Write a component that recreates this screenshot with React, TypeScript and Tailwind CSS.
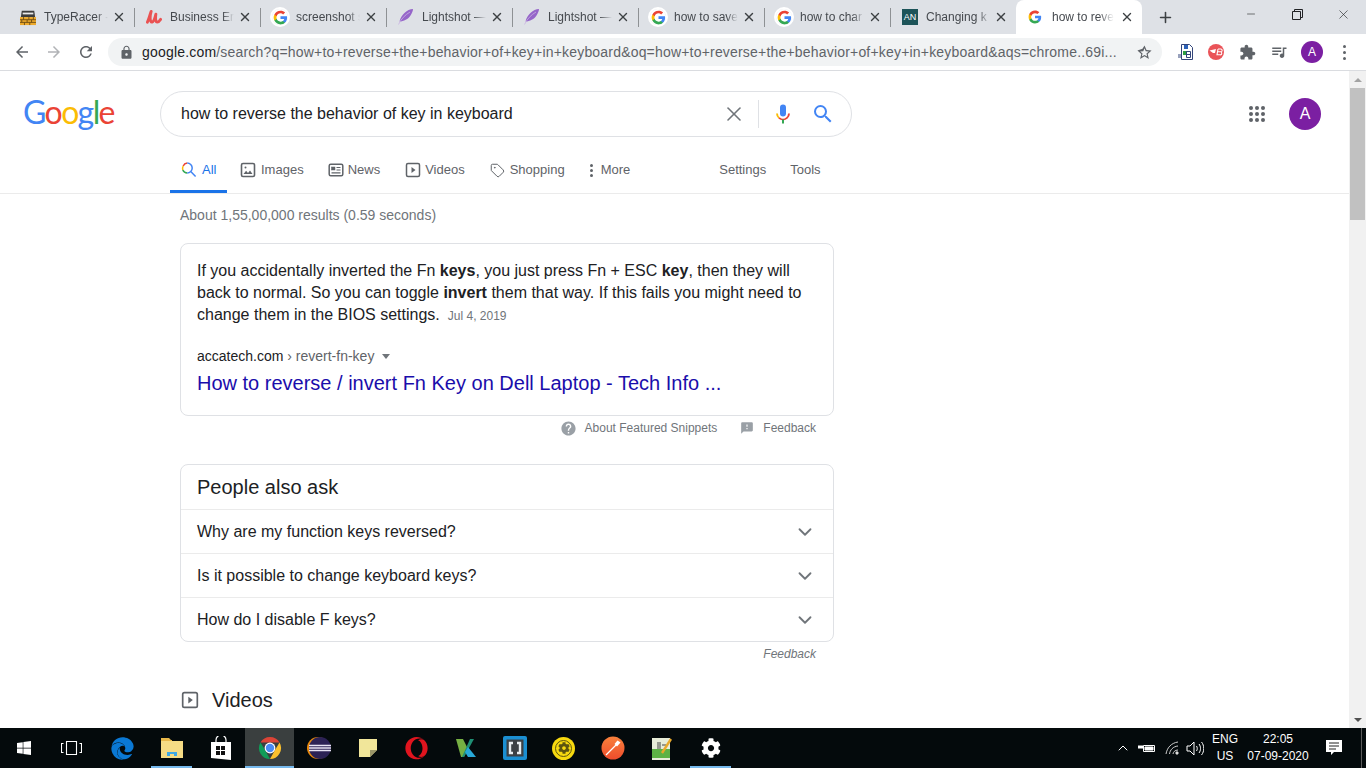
import React from "react";
import { X, Plus, Minus, ChevronDown, Tag, ChevronUp } from "lucide-react";
import { FaEdge, FaOpera, FaWindows, FaCog } from "react-icons/fa";

const GoogleG = ({ size = 16 }: { size?: number }) => (
  <svg width={size} height={size} viewBox="0 0 24 24">
    <path fill="#4285F4" d="M22.56 12.25c0-.78-.07-1.53-.2-2.25H12v4.26h5.92c-.26 1.37-1.04 2.53-2.21 3.31v2.77h3.57c2.08-1.92 3.28-4.74 3.28-8.09z" />
    <path fill="#34A853" d="M12 23c2.97 0 5.46-.98 7.28-2.66l-3.57-2.77c-.98.66-2.23 1.06-3.71 1.06-2.86 0-5.29-1.93-6.16-4.53H2.18v2.84C3.99 20.53 7.7 23 12 23z" />
    <path fill="#FBBC05" d="M5.84 14.09c-.22-.66-.35-1.36-.35-2.09s.13-1.43.35-2.09V7.07H2.18C1.43 8.55 1 10.22 1 12s.43 3.45 1.18 4.93l2.85-2.22.81-.62z" />
    <path fill="#EA4335" d="M12 5.38c1.62 0 3.06.56 4.21 1.64l3.15-3.15C17.45 2.09 14.97 1 12 1 7.7 1 3.99 3.47 2.18 7.07l3.66 2.84c.87-2.6 3.3-4.53 6.16-4.53z" />
  </svg>
);

const GoogleFav = () => (
  <div className="w-4 h-4 flex items-center justify-center rounded-full bg-white outline outline-2 outline-white">
    <GoogleG size={15} />
  </div>
);

const TypeRacerFav = () => (
  <svg width="18" height="17" viewBox="0 0 18 17">
    <path fill="#3c3c3c" d="M2 1h14l1 7H1z" />
    <path fill="#e9e9e9" d="M3 3h12v2H3z" />
    <path fill="#eda92b" d="M0 8h18v9H0z" />
    <path stroke="#6b4a12" strokeWidth="1" d="M0 11h18M0 14h18M4 8v3M10 8v3M15 8v3M2 11v3M8 11v3M13 11v3M5 14v3M11 14v3" />
  </svg>
);

const UdemyFav = () => (
  <svg width="17" height="16" viewBox="0 0 17 16" fill="none" stroke="#ea5252" strokeWidth="3" strokeLinecap="round">
    <path d="M1.500 13.500C3 10 4 6 5.500 2M5.500 2C4 7 4 14 6.500 13.500 8.500 13 9.500 9 10.500 5M10.500 5C10 9 10 13.500 12 13.500 13.500 13.500 14.500 12 15.500 10.500" />
  </svg>
);

const FeatherFav = () => (
  <svg width="16" height="16" viewBox="0 0 16 16">
    <path fill="#9565c9" d="M15 0C9 .5 3.500 5 1.500 12.500c4 0 9-2.500 11-6C14 4 15 2 15 0z" />
    <path stroke="#c9b3e2" strokeWidth=".8" fill="none" d="M.5 15.500C3 10 7 6 12 3" />
  </svg>
);

const AnFav = () => (
  <div className="w-4 h-4 bg-[#1d5459] text-white text-[9px] leading-4 text-center">AN</div>
);

const tabs = [
  { title: "TypeRacer -", icon: <TypeRacerFav /> },
  { title: "Business En", icon: <UdemyFav /> },
  { title: "screenshot s", icon: <GoogleFav /> },
  { title: "Lightshot —", icon: <FeatherFav /> },
  { title: "Lightshot —", icon: <FeatherFav /> },
  { title: "how to save", icon: <GoogleFav /> },
  { title: "how to char", icon: <GoogleFav /> },
  { title: "Changing k", icon: <AnFav /> },
];

const TabStrip = () => (
  <div className="h-[34px] bg-[#dee1e6] flex pl-[8px] shrink-0 relative">
    {tabs.map((t, i) => (
      <div key={i} className="w-[126px] h-[34px] flex items-center pl-[12px] pr-[8px] relative">
        <div className="w-4 flex justify-center shrink-0">{t.icon}</div>
        <div className="ml-[8px] w-[64px] overflow-hidden whitespace-nowrap text-[12px] text-[#45494e] [mask-image:linear-gradient(to_right,black_82%,transparent)]">
          {t.title}
        </div>
        <X size={14} strokeWidth={2.4} className="ml-auto text-[#3c4043]" />
        {i < 7 && <div className="absolute right-[-1px] top-[8px] h-[19px] w-px bg-[#8e9194]" />}
      </div>
    ))}
    <div className="w-[126px] h-[34px] bg-white rounded-t-[8px] flex items-center pl-[12px] pr-[8px]">
      <GoogleG size={14} />
      <div className="ml-[10px] w-[62px] overflow-hidden whitespace-nowrap text-[12px] text-[#45494e] [mask-image:linear-gradient(to_right,black_75%,transparent)]">
        how to reve
      </div>
      <X size={14} strokeWidth={2.4} className="ml-auto text-[#3c4043]" />
    </div>
    <div className="w-[46px] flex items-center justify-center">
      <Plus size={17} strokeWidth={2.2} className="text-[#3c4043]" />
    </div>
    <div className="ml-auto flex h-[28px] items-center text-[#202124]">
      <div className="w-[46px] flex justify-center"><Minus size={12} strokeWidth={1.2} /></div>
      <div className="w-[46px] flex justify-center">
        <svg width="11" height="11" viewBox="0 0 11 11" fill="none" stroke="#202124">
          <path d="M.5 2.500h8v8h-8zM2.500 2.500v-2h8v8h-2" />
        </svg>
      </div>
      <div className="w-[46px] flex justify-center"><X size={15} strokeWidth={1} /></div>
    </div>
  </div>
);

const MIcon = ({ d, size = 16, color = "#5f6368" }: { d: string; size?: number; color?: string }) => (
  <svg width={size} height={size} viewBox="0 0 24 24" fill={color}><path d={d} /></svg>
);

const UrlBar = () => (
  <div className="h-[37px] bg-white border-b border-[#dadce0] flex items-center shrink-0">
    <div className="w-[108px] flex items-center pl-[13px] shrink-0">
      <MIcon size={18} d="M20 11H7.83l5.59-5.59L12 4l-8 8 8 8 1.41-1.41L7.83 13H20v-2z" />
      <div className="ml-[14px]"><MIcon size={18} color="#b1b3b6" d="M12 4l-1.41 1.41L16.17 11H4v2h12.17l-5.58 5.59L12 20l8-8z" /></div>
      <div className="ml-[14px]"><MIcon size={18} d="M17.65 6.35C16.2 4.9 14.21 4 12 4c-4.42 0-7.99 3.58-7.99 8s3.57 8 7.99 8c3.73 0 6.84-2.55 7.73-6h-2.08c-.82 2.33-3.04 4-5.65 4-3.31 0-6-2.69-6-6s2.69-6 6-6c1.66 0 3.14.69 4.22 1.78L13 11h7V4l-2.35 2.35z" /></div>
    </div>
    <div className="w-[1054px] h-[28px] rounded-full bg-[#f1f3f4] flex items-center pl-[11px] pr-[9px] shrink-0">
      <MIcon size={15} color="#5f6368" d="M18 8h-1V6c0-2.76-2.24-5-5-5S7 3.24 7 6v2H6c-1.1 0-2 .9-2 2v10c0 1.1.9 2 2 2h12c1.1 0 2-.9 2-2V10c0-1.1-.9-2-2-2zm-6 9c-1.1 0-2-.9-2-2s.9-2 2-2 2 .9 2 2-.9 2-2 2zm3.1-9H8.9V6c0-1.71 1.39-3.1 3.1-3.1 1.71 0 3.1 1.39 3.1 3.1v2z" />
      <div className="ml-[8px] text-[14px] text-[#5f6368] whitespace-nowrap tracking-[0.19px]">
        <span className="text-[#202124]">google.com</span>/search?q=how+to+reverse+the+behavior+of+key+in+keyboard&amp;oq=how+to+reverse+the+behavior+of+key+in+keyboard&amp;aqs=chrome..69i...
      </div>
      <div className="ml-auto"><MIcon size={17} d="M22 9.24l-7.19-.62L12 2 9.19 6.63 2 9.24l5.46 4.73L5.82 21 12 17.27 18.18 21l-1.63-7.03L22 9.24zM12 15.4l-3.76 2.27 1-4.28-3.32-2.88 4.38-.38L12 6.1l1.71 4.04 4.38.38-3.32 2.88 1 4.28L12 15.4z" /></div>
    </div>
    <div className="flex items-center ml-[14px]">
      <svg width="18" height="18" viewBox="0 0 18 18" className="ml-[1px]">
        <path fill="#fff" stroke="#33457a" d="M4.500 1.500h8l3 3v12h-11z" />
        <path fill="#2f9e44" d="M6 8h4v4H6z" />
        <path fill="#2d62b8" d="M7 2h4v4H7z" />
        <path stroke="#33457a" fill="none" d="M9.500 8.500h4v6h-4zM9.500 11.500h4M1 12h3M1 14h3" />
      </svg>
      <svg width="16" height="16" viewBox="0 0 16 16" className="ml-[13px]">
        <circle cx="8" cy="8" r="8" fill="#ea5358" />
        <path fill="#fff" d="M1.500 6.500L8 5 7 9H5z" />
        <path fill="none" stroke="#fff" strokeWidth="1.100" d="M10 5h2.500a1 1 0 0 1 .5 2.800H9.500M9.500 7.800h3a1.200 1.200 0 0 1-.5 3H9L10 5" />
      </svg>
      <div className="ml-[15px]"><MIcon size={17} d="M20.5 11H19V7c0-1.1-.9-2-2-2h-4V3.5C13 2.12 11.88 1 10.5 1S8 2.12 8 3.5V5H4c-1.1 0-1.99.9-1.99 2v3.8H3.5c1.49 0 2.7 1.21 2.7 2.7s-1.21 2.7-2.7 2.7H2V20c0 1.1.9 2 2 2h3.8v-1.5c0-1.49 1.21-2.7 2.7-2.7 1.49 0 2.7 1.21 2.7 2.7V22H17c1.1 0 2-.9 2-2v-4h1.5c1.38 0 2.5-1.12 2.5-2.5S21.88 11 20.5 11z" /></div>
      <div className="ml-[14px]"><MIcon size={18} d="M15 6H3v2h12V6zm0 4H3v2h12v-2zM3 16h8v-2H3v2zM17 6v8.18c-.31-.11-.65-.18-1-.18-1.66 0-3 1.34-3 3s1.34 3 3 3 3-1.34 3-3V8h3V6h-5z" /></div>
      <div className="ml-[13px] w-[22px] h-[22px] rounded-full bg-[#7b1fa2] text-white text-[12px] flex items-center justify-center">A</div>
      <div className="ml-[20px] flex flex-col gap-[3px]">
        <div className="w-[3px] h-[3px] rounded-full bg-[#5f6368]" />
        <div className="w-[3px] h-[3px] rounded-full bg-[#5f6368]" />
        <div className="w-[3px] h-[3px] rounded-full bg-[#5f6368]" />
      </div>
    </div>
  </div>
);

const Mic = () => (
  <svg width="24" height="24" viewBox="0 0 24 24">
    <rect x="9" y="2.500" width="6" height="12" rx="3" fill="#4285f4" />
    <path d="M6 11.500a6 6 0 0 0 2 4.400" stroke="#fbbc05" strokeWidth="1.900" fill="none" />
    <path d="M8 15.900a6 6 0 0 0 8 0 6 6 0 0 0 2-4.400" stroke="#ea4335" strokeWidth="1.900" fill="none" />
    <rect x="11" y="17.500" width="2" height="4" fill="#34a853" />
  </svg>
);

const SearchLens = ({ size = 24 }: { size?: number }) => (
  <MIcon size={size} color="#4285f4" d="M15.5 14h-.79l-.28-.27A6.471 6.471 0 0 0 16 9.5 6.5 6.5 0 1 0 9.5 16c1.61 0 3.09-.59 4.23-1.57l.27.28v.79l5 4.99L20.49 19l-4.99-5zm-6 0C7.01 14 5 11.99 5 9.5S7.01 5 9.5 5 14 7.01 14 9.5 11.99 14 9.5 14z" />
);

const AllLens = () => (
  <svg width="16" height="16" viewBox="0 0 16 16" fill="none" strokeWidth="1.500">
    <path d="M2.200 4A5 5 0 0 1 6.200 1" stroke="#ea4335" />
    <path d="M1.800 8A5 5 0 0 1 2.200 4" stroke="#fbbc05" />
    <path d="M6.200 11A5 5 0 0 1 1.800 8" stroke="#34a853" />
    <path d="M6.200 1A5 5 0 1 1 6.200 11M10 9.800l4.600 4.700" stroke="#4285f4" />
  </svg>
);

const ImagesIcon = () => (
  <svg width="16" height="16" viewBox="0 0 16 16" fill="none">
    <rect x="1.500" y="1.500" width="13" height="13" rx="1.500" stroke="#5f6368" strokeWidth="1.600" />
    <path fill="#5f6368" d="M3.500 12l2.600-3.200 1.900 2.200 2-2.600 2.500 3.600z" />
    <circle cx="5.500" cy="5.500" r="1" fill="#5f6368" />
  </svg>
);

const NewsIcon = () => (
  <svg width="16" height="16" viewBox="0 0 16 16" fill="none" stroke="#5f6368">
    <rect x="1.200" y="2.200" width="13.600" height="11.600" rx="1.500" strokeWidth="1.500" />
    <rect x="3.500" y="5" width="3.500" height="3" fill="#5f6368" strokeWidth="0.500" />
    <path strokeWidth="1.200" d="M8.500 5.500h4M8.500 8h4M3.500 10.800h9" />
  </svg>
);

const PlayBoxIcon = ({ size = 16 }: { size?: number }) => (
  <svg width={size} height={size} viewBox="0 0 16 16" fill="none">
    <rect x="1.500" y="1.500" width="13" height="13" rx="1.500" stroke="#5f6368" strokeWidth="1.500" />
    <path fill="#5f6368" d="M6.500 5l4 3-4 3z" />
  </svg>
);

const navItem = "flex items-center pt-[10px] text-[13px] text-[#5f6368]";

const Header = () => (
  <div className="shrink-0">
    <div className="flex items-center pt-[20px]">
      <div className="w-[160px] pl-[23px] -mt-[4px] font-['Lato',sans-serif] text-[32px] leading-[46px] tracking-[-1.600px] whitespace-nowrap">
        <span className="text-[#4285f4]">G</span>
        <span className="text-[#ea4335]">o</span>
        <span className="text-[#fbbc05]">o</span>
        <span className="text-[#4285f4]">g</span>
        <span className="text-[#34a853]">l</span>
        <span className="text-[#ea4335]">e</span>
      </div>
      <div className="w-[692px] h-[46px] rounded-full border border-[#dfe1e5] flex items-center pl-[20px] pr-[16px]">
        <span className="text-[16px] text-[#202124]">how to reverse the behavior of key in keyboard</span>
        <X size={24} strokeWidth={1.6} className="ml-auto text-[#70757a]" />
        <div className="w-px h-[28px] bg-[#dfe1e5] ml-[12px] mr-[12px]" />
        <Mic />
        <div className="ml-[16px]"><SearchLens /></div>
      </div>
      <div className="ml-auto flex items-center pr-[28px]">
        <div className="grid grid-cols-3 gap-[2px]">
          {[0, 1, 2, 3, 4, 5, 6, 7, 8].map((i) => (
            <div key={i} className="w-[4px] h-[4px] rounded-full bg-[#5f6368]" />
          ))}
        </div>
        <div className="ml-[24px] w-[32px] h-[32px] rounded-full bg-[#7b1fa2] text-white text-[16px] flex items-center justify-center">A</div>
      </div>
    </div>
    <div className="h-[57px] border-b border-[#ebebeb] flex items-stretch pl-[170px]">
      <div className="w-[57px] pl-[11px] pt-[13px] border-b-[3px] border-[#1a73e8] flex items-center gap-[5px] text-[13px] text-[#1a73e8]">
        <AllLens />
        All
      </div>
      <div className={navItem + " gap-[5px] ml-[13px]"}><ImagesIcon />Images</div>
      <div className={navItem + " gap-[4px] ml-[24px]"}><NewsIcon />News</div>
      <div className={navItem + " gap-[4px] ml-[25px]"}><PlayBoxIcon />Videos</div>
      <div className={navItem + " gap-[5px] ml-[25px]"}><Tag size={15} strokeWidth={1.6} />Shopping</div>
      <div className={navItem + " gap-[8px] ml-[25px]"}>
        <div className="flex flex-col gap-[2px]">
          <div className="w-[3px] h-[3px] rounded-full bg-[#5f6368]" />
          <div className="w-[3px] h-[3px] rounded-full bg-[#5f6368]" />
          <div className="w-[3px] h-[3px] rounded-full bg-[#5f6368]" />
        </div>
        More
      </div>
      <div className={navItem + " ml-[89px]"}>Settings</div>
      <div className={navItem + " ml-[24px]"}>Tools</div>
    </div>
  </div>
);

const questions = [
  "Why are my function keys reversed?",
  "Is it possible to change keyboard keys?",
  "How do I disable F keys?",
];

const Results = () => (
  <div className="pl-[180px] w-[834px] box-content">
    <div className="pt-[11px] h-[49px] text-[14px] leading-[20px] text-[#70757a]">
      About 1,55,00,000 results (0.59 seconds)
    </div>
    <div className="w-[654px] h-[173px] border border-[#dfe1e5] rounded-[8px] px-[16px] pt-[16px]">
      <div className="text-[16px] leading-[22px] text-[#202124]">
        If you accidentally inverted the Fn <b>keys</b>, you just press Fn + ESC <b>key</b>, then they will
        back to normal. So you can toggle <b>invert</b> them that way. If this fails you might need to
        change them in the BIOS settings.<span className="ml-[8px] text-[12px] text-[#70757a]">Jul 4, 2019</span>
      </div>
      <div className="mt-[19px] flex items-center text-[14px] leading-[20px] text-[#202124]">
        accatech.com<span className="text-[#5f6368]">&nbsp;› revert-fn-key</span>
        <div className="ml-[8px] mt-[1px] w-0 h-0 border-x-[4px] border-x-transparent border-t-[5px] border-t-[#70757a]" />
      </div>
      <div className="mt-[4px] text-[20px] leading-[26px] text-[#1a0dab]">
        How to reverse / invert Fn Key on Dell Laptop - Tech Info ...
      </div>
    </div>
    <div className="w-[636px] h-[22px] mt-[1px] flex items-center justify-end text-[12px] text-[#70757a]">
      <MIcon size={17} color="#9aa0a6" d="M12 2C6.48 2 2 6.48 2 12s4.48 10 10 10 10-4.48 10-10S17.52 2 12 2zm1 17h-2v-2h2v2zm2.07-7.75l-.9.92C13.45 12.9 13 13.5 13 15h-2v-.5c0-1.1.45-2.1 1.17-2.83l1.24-1.26c.37-.36.59-.86.59-1.41 0-1.1-.9-2-2-2s-2 .9-2 2H8c0-2.21 1.79-4 4-4s4 1.79 4 4c0 .88-.36 1.68-.93 2.25z" />
      <span className="ml-[8px]">About Featured Snippets</span>
      <div className="ml-[23px]"><MIcon size={14} color="#9aa0a6" d="M20 2H4c-1.1 0-1.99.9-1.99 2L2 22l4-4h14c1.1 0 2-.9 2-2V4c0-1.1-.9-2-2-2zm-7 12h-2v-2h2v2zm0-4h-2V6h2v4z" /></div>
      <span className="ml-[9px]">Feedback</span>
    </div>
    <div className="mt-[25px] w-[654px] border border-[#dfe1e5] rounded-[8px]">
      <div className="h-[44px] pl-[16px] flex items-center text-[20px] text-[#202124]">People also ask</div>
      {questions.map((q) => (
        <div key={q} className="h-[44px] border-t border-[#ebebeb] pl-[16px] pr-[17px] flex items-center justify-between text-[16px] text-[#202124]">
          {q}
          <ChevronDown size={22} strokeWidth={2} className="text-[#70757a]" />
        </div>
      ))}
    </div>
    <div className="w-[636px] h-[24px] flex items-center justify-end text-[12px] italic text-[#70757a]">Feedback</div>
    <div className="mt-[19px] flex items-center text-[20px] text-[#202124]">
      <div className="ml-[1px]"><PlayBoxIcon size={18} /></div>
      <span className="ml-[13px]">Videos</span>
    </div>
  </div>
);

const Scrollbar = () => (
  <div className="w-[17px] bg-[#f1f1f1] flex flex-col shrink-0">
    <div className="h-[17px] flex items-center justify-center">
      <div className="w-0 h-0 border-x-[4px] border-x-transparent border-b-[4px] border-b-[#a3a3a3]" />
    </div>
    <div className="mx-auto w-[15px] h-[132px] bg-[#c1c1c1]" />
    <div className="mt-auto h-[17px] flex items-center justify-center">
      <div className="w-0 h-0 border-x-[4px] border-x-transparent border-t-[4px] border-t-[#505050]" />
    </div>
  </div>
);

const Chrome = () => (
  <svg width="24" height="24" viewBox="0 0 24 24">
    <path fill="#db4437" d="M2.470 6.500A11 11 0 0 1 21.530 6.500H12z" />
    <path fill="#fbc02d" d="M21.530 6.500A11 11 0 0 1 12 23l5-9z" />
    <path fill="#0f9d58" d="M12 23A11 11 0 0 1 2.470 6.500L7 14z" />
    <circle cx="12" cy="12" r="5.400" fill="#fff" />
    <circle cx="12" cy="12" r="4.200" fill="#4a8af4" />
  </svg>
);

const Explorer = () => (
  <svg width="22" height="20" viewBox="0 0 22 20">
    <path fill="#e8b84a" d="M0 0h8l2 2h1v3H0z" />
    <path fill="#f6dc85" d="M0 3h22v17H0z" />
    <path fill="#3fa9e6" d="M6 18v-4h10v4h-3v-2H9v2z" />
  </svg>
);

const Store = () => (
  <svg width="22" height="24" viewBox="0 0 22 24">
    <path fill="none" stroke="#fff" strokeWidth="1.200" d="M6 7V4a5 5 0 0 1 10 0v3" />
    <path fill="#fff" d="M1 6h20v18L1 22z" />
    <path fill="#111" d="M6 10h4v4H6zM11 10h4v4h-4zM6 15h4v4H6zM11 15h4v4h-4z" />
  </svg>
);

const Eclipse = () => (
  <svg width="24" height="24" viewBox="0 0 24 24">
    <circle cx="11" cy="12" r="11" fill="#e8890c" />
    <circle cx="13" cy="12" r="11" fill="#2c2255" />
    <path stroke="#e8e4f4" strokeWidth="1.400" d="M2 9.500h22M2 12h22M2 14.500h22" />
  </svg>
);

const Notes = () => (
  <svg width="18" height="18" viewBox="0 0 18 18">
    <path fill="#f1e69a" d="M0 0h18v11l-7 7H0z" />
    <path fill="#9a9568" d="M18 11l-7 7v-7z" />
  </svg>
);

const KiteK = () => (
  <svg width="20" height="20" viewBox="0 0 20 20">
    <path fill="#76b043" d="M0 1h7l5 10-4 8H5z" />
    <path fill="#1f8f75" d="M18 1L8 19H6L14 1z" />
    <path fill="#27a8d8" d="M12 9l8 10h-8l-3-5z" />
  </svg>
);

const Brackets = () => (
  <svg width="24" height="24" viewBox="0 0 24 24">
    <rect width="24" height="24" rx="2" fill="#1b8fd2" />
    <rect x="3.500" y="3.500" width="17" height="17" fill="#3d4145" />
    <path fill="none" stroke="#e9edf0" strokeWidth="2.400" d="M10 7H7v10h3M14 7h3v10h-3" />
  </svg>
);

const YellowGear = () => (
  <div className="w-[23px] h-[23px] rounded-full bg-[#f7d90f] flex items-center justify-center">
    <div className="w-[17px] h-[17px] rounded-full border border-[#5c5410] flex items-center justify-center">
      <FaCog size={12} className="text-[#5c5410]" />
    </div>
  </div>
);

const Postman = () => (
  <svg width="24" height="24" viewBox="0 0 24 24">
    <defs>
      <linearGradient id="pm" x1="0" y1="0" x2="0" y2="1">
        <stop offset="0" stopColor="#f8813c" />
        <stop offset="1" stopColor="#ef4c2c" />
      </linearGradient>
    </defs>
    <circle cx="12" cy="12" r="11.500" fill="url(#pm)" />
    <path stroke="#fff" strokeWidth="1.300" d="M5 19L17 7" />
    <path fill="#fff" d="M13.500 8l3-3.500 3 2-3.500 4z" />
  </svg>
);

const NotepadPP = () => (
  <svg width="22" height="24" viewBox="0 0 22 24">
    <path fill="#e7ecd8" d="M1 2h18v22H1z" />
    <path fill="#5db244" d="M1 13h18v9H1z" />
    <path stroke="#444" strokeWidth="1" d="M7 6v7M9 6v7M11 9h4" />
    <path stroke="#e9a92b" strokeWidth="2.400" d="M11 17L20 3" />
  </svg>
);

const taskIcons = [
  { icon: <Explorer />, bar: "explorer" },
  { icon: <Store /> },
  { icon: <Chrome />, bar: "active" },
  { icon: <Eclipse /> },
  { icon: <Notes /> },
  { icon: <FaOpera size={23} className="text-[#e0141e]" /> },
  { icon: <KiteK /> },
  { icon: <Brackets /> },
  { icon: <YellowGear /> },
  { icon: <Postman /> },
  { icon: <NotepadPP /> },
  { icon: <FaCog size={20} className="text-white" />, bar: "gear" },
];

const Taskbar = () => (
  <div className="h-[40px] bg-[#040a0c] flex items-stretch shrink-0 text-white text-[12px]">
    <div className="w-[48px] flex items-center justify-center"><FaWindows size={16} /></div>
    <div className="w-[47px] flex items-center justify-center">
      <svg width="21" height="14" viewBox="0 0 21 14" fill="none" stroke="#fff" strokeWidth="1.100">
        <path d="M5.500 .5h10v13h-10zM2.500 2.500H.5v9h2M18.500 2.500h2v9h-2" />
      </svg>
    </div>
    <div className="ml-[3px] w-[49px] flex items-center justify-center"><FaEdge size={23} className="text-[#0a78d4]" /></div>
    {taskIcons.map((t, i) => (
      <div key={i} className={"w-[49px] relative flex items-center justify-center " + (t.bar === "active" ? "bg-[#3a3f3f]" : "")}>
        {t.icon}
        {t.bar && <div className={"absolute bottom-0 h-[2px] bg-[#76b9ed] " + (t.bar === "active" ? "left-0 right-0" : "left-[4px] right-[4px]")} />}
      </div>
    ))}
    <div className="ml-auto flex items-center">
      <ChevronUp size={16} strokeWidth={1.5} />
      <svg width="18" height="12" viewBox="0 0 18 12" fill="none" stroke="#fff" className="ml-[7px]">
        <path d="M5.500 3.500h11v6h-11z" />
        <path fill="#fff" d="M7 5h8v3H7zM0 4h5v2H0z" />
      </svg>
      <svg width="16" height="14" viewBox="0 0 16 14" fill="none" stroke="#cfcfcf" strokeWidth="1" className="ml-[9px]">
        <path d="M1 13C2 7 6 2 13 1M4.500 13C5 9 8 5.500 13 5M8 13c.2-2 2-4 5-4" />
        <circle cx="12" cy="12" r="1.200" fill="#fff" />
      </svg>
      <svg width="18" height="15" viewBox="0 0 18 15" fill="none" stroke="#fff" className="ml-[5px]">
        <path d="M1 5h3l4-4v13l-4-4H1zM10.500 5c1 1.500 1 3.500 0 5M13 3c2 2.500 2 6.500 0 9M15.500 1c3 3.500 3 9.500 0 13" />
      </svg>
      <div className="ml-[4px] w-[34px] text-center leading-[17px]">
        ENG
        <br />
        US
      </div>
      <div className="ml-[5px] w-[62px] text-center leading-[17px] whitespace-nowrap">
        22:05
        <br />
        07-09-2020
      </div>
      <div className="w-[52px] pr-[2px] flex justify-center">
        <svg width="16" height="16" viewBox="0 0 16 16">
          <path fill="#fff" d="M0 0h16v12H8l-3 3v-3H0z" />
          <path stroke="#222" d="M3 3h10M3 6h10M3 9h7" />
        </svg>
      </div>
      <div className="w-px h-full bg-[#5a5a5a] mr-[4px]" />
    </div>
  </div>
);

export default function App() {
  return (
    <div className="w-[1366px] h-[768px] overflow-hidden flex flex-col bg-white font-['Liberation_Sans',Arial,sans-serif]">
      <TabStrip />
      <UrlBar />
      <div className="flex-1 flex min-h-0">
        <div className="flex-1 min-w-0 overflow-hidden">
          <Header />
          <Results />
        </div>
        <Scrollbar />
      </div>
      <Taskbar />
    </div>
  );
}
